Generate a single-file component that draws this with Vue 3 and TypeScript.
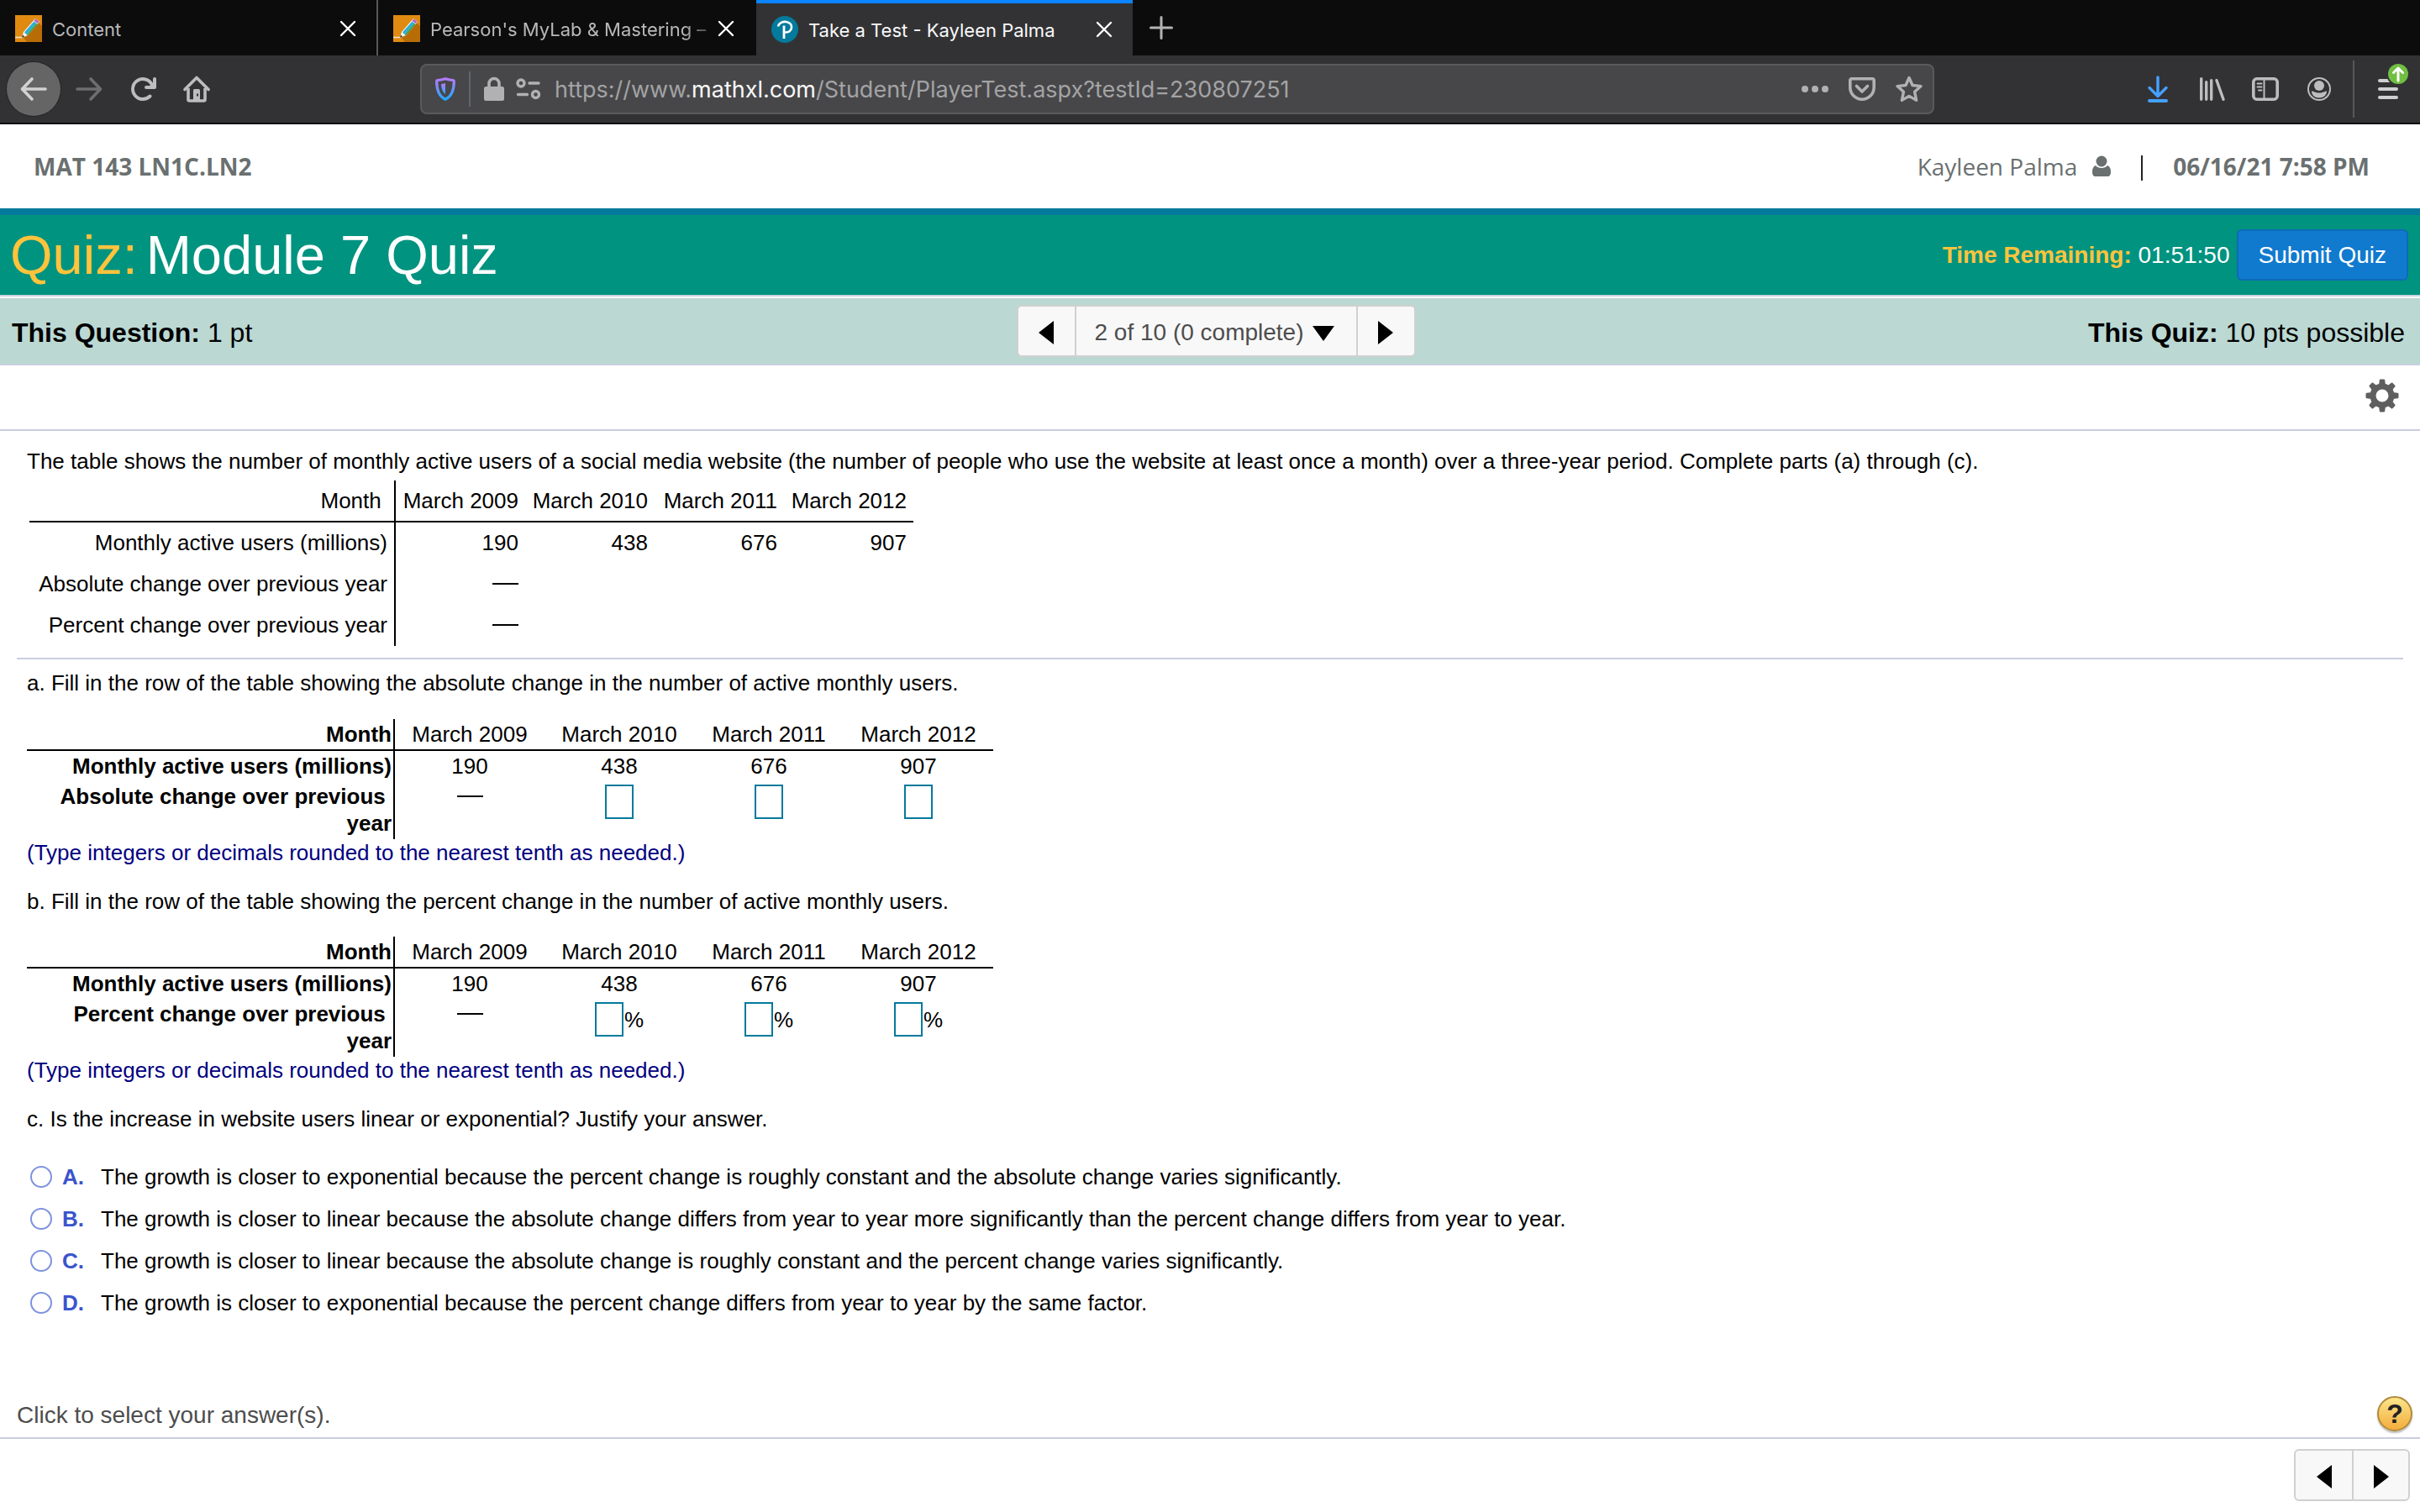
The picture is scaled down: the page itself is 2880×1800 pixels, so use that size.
<script setup lang="ts">
import { ref } from 'vue'

interface Choice { letter: string; text: string }
interface Part { id: string; prompt: string; label: string; unit: string }

const months: string[] = ['March 2009', 'March 2010', 'March 2011', 'March 2012']
const users: number[] = [190, 438, 676, 907]
const changeRows: string[] = ['Absolute change over previous year', 'Percent change over previous year']

const parts: Part[] = [
  { id: 'a', prompt: 'a. Fill in the row of the table showing the absolute change in the number of active monthly users.', label: 'Absolute change over previous', unit: '' },
  { id: 'b', prompt: 'b. Fill in the row of the table showing the percent change in the number of active monthly users.', label: 'Percent change over previous', unit: '%' },
]

const choices: Choice[] = [
  { letter: 'A', text: 'The growth is closer to exponential because the percent change is roughly constant and the absolute change varies significantly.' },
  { letter: 'B', text: 'The growth is closer to linear because the absolute change differs from year to year more significantly than the percent change differs from year to year.' },
  { letter: 'C', text: 'The growth is closer to linear because the absolute change is roughly constant and the percent change varies significantly.' },
  { letter: 'D', text: 'The growth is closer to exponential because the percent change differs from year to year by the same factor.' },
]

const tabs = [
  { title: 'Content', icon: 'pencil', active: false },
  { title: "Pearson's MyLab & Mastering –", icon: 'pencil', active: false },
  { title: 'Take a Test - Kayleen Palma', icon: 'pearson', active: true },
]

const picked = ref<string>('')
</script>

<template>
  <div class="window">
    <div class="tabs">
      <div v-for="tab in tabs" :key="tab.title" class="tab" :class="{ active: tab.active }">
        <svg v-if="tab.icon === 'pencil'" class="ico" viewBox="0 0 32 32">
          <rect width="32" height="32" fill="#e08a12" />
          <path d="M10 27 28 9 32 13V32H14z" fill="#b86c06" />
          <path d="M0 26.500h9" stroke="#f3e6cc" stroke-width="1.500" />
          <path d="M8 27 10 20 24 4 29 8 15 24z" fill="#f4f4f4" />
          <path d="M11 20.500 22.500 7.500 25 9.500 13.500 23z" fill="#27b0d8" />
          <path d="M13.500 23 25 9.500 26.500 11 15 24z" fill="#35a35c" />
          <path d="M22.500 6.500 24.500 4.500 28.500 8 26.500 10z" fill="#b45fc0" />
          <path d="M8 27l1-3.500 2 2z" fill="#333" />
        </svg>
        <svg v-else class="ico" viewBox="0 0 32 32">
          <circle cx="16" cy="16" r="16" fill="#047a9c" />
          <path d="M8 12.500C9 8 14 6.500 17.500 7c4.500.6 7 3.400 6.500 7-.5 3.800-4 5.800-8 5.500" fill="none" stroke="#fff" stroke-width="2.600" />
          <path d="M15 11.500V27" stroke="#fff" stroke-width="2.800" />
        </svg>
        <span class="tab-title">{{ tab.title }}</span>
        <button class="plain" aria-label="Close tab">
          <svg width="20" height="20" viewBox="0 0 20 20"><path d="M2 2 18 18M18 2 2 18" stroke="#fff" stroke-width="2.400" stroke-linecap="round" /></svg>
        </button>
      </div>
      <button class="plain new-tab" aria-label="New tab">
        <svg width="28" height="28" viewBox="0 0 28 28"><path d="M14 1.500v25M1.500 14h25" stroke="#b4b4b5" stroke-width="3" stroke-linecap="round" /></svg>
      </button>
    </div>

    <div class="toolbar">
      <div class="history">
        <button class="plain back" aria-label="Back">
          <svg class="ico" viewBox="0 0 32 32"><path d="M30 16H3M14 4 2.500 16 14 28" fill="none" stroke="#d2d2d3" stroke-width="3.600" stroke-linecap="round" stroke-linejoin="round" /></svg>
        </button>
        <button class="plain" aria-label="Forward">
          <svg class="ico" viewBox="0 0 32 32"><path d="M2 16h27M18 4 29.500 16 18 28" fill="none" stroke="#6e6e70" stroke-width="3.600" stroke-linecap="round" stroke-linejoin="round" /></svg>
        </button>
        <button class="plain" aria-label="Reload">
          <svg class="ico" viewBox="0 0 16 16"><path fill="#bdbdbe" d="M15 1a1 1 0 0 0-1 1v2.418A6.995 6.995 0 1 0 8 15a6.954 6.954 0 0 0 4.950-2.050 1 1 0 0 0-1.414-1.414A5.019 5.019 0 1 1 12.549 6H10a1 1 0 0 0 0 2h5a1 1 0 0 0 1-1V2a1 1 0 0 0-1-1z" /></svg>
        </button>
        <button class="plain" aria-label="Home">
          <svg class="ico" viewBox="0 0 32 32"><path d="M2 16.500 16 2.500 30 16.500" fill="none" stroke="#bdbdbe" stroke-width="3.600" stroke-linecap="round" stroke-linejoin="round" /><path d="M6 15v13.500a1.500 1.500 0 0 0 1.500 1.500h17a1.500 1.500 0 0 0 1.500-1.500V15" fill="none" stroke="#bdbdbe" stroke-width="3.600" /><path d="M12 30V17.500a1.500 1.500 0 0 1 1.500-1.500h5a1.500 1.500 0 0 1 1.500 1.500V30z" fill="#bdbdbe" /><rect x="16" y="21.500" width="2" height="3" fill="#323234" /></svg>
        </button>
      </div>

      <div class="address">
        <svg class="shield" width="24" height="28" viewBox="0 0 24 28">
          <defs><linearGradient id="shieldFill" x1="0" y1="0" x2="0" y2="1"><stop offset="0" stop-color="#b77cff" /><stop offset="1" stop-color="#1fa8ff" /></linearGradient></defs>
          <path d="M12 1.700c3.200.9 6.200 1.600 9 1.800.8 0 1.300.6 1.300 1.400C22.300 15 20 22.500 12 26.300 4 22.500 1.700 15 1.700 4.900c0-.8.5-1.400 1.300-1.400 2.800-.2 5.800-.9 9-1.800z" fill="none" stroke="url(#shieldFill)" stroke-width="3.200" />
          <path d="M12 7v13.500C8.500 17.500 7.200 13.500 7 8.200z" fill="url(#shieldFill)" />
        </svg>
        <span class="address-rule"></span>
        <svg width="24" height="30" viewBox="0 0 24 30"><path d="M6 14V8.500a6 6 0 0 1 12 0V14" fill="none" stroke="#b1b1b3" stroke-width="3.600" /><rect y="12" width="24" height="17" rx="2.500" fill="#b1b1b3" /></svg>
        <svg class="perm" width="30" height="26" viewBox="0 0 30 26" fill="none" stroke="#b1b1b3" stroke-width="3.400" stroke-linecap="round"><circle cx="6" cy="6" r="4" /><path d="M16 6h11M2.500 19.500h11" /><circle cx="23.500" cy="19.500" r="4" /></svg>
        <div class="url" role="textbox" contenteditable="true" spellcheck="false" aria-label="Address">https://www.<b>mathxl.com</b>/Student/PlayerTest.aspx?testId=230807251</div>
        <button class="plain" aria-label="Page actions">
          <svg class="ico" viewBox="0 0 32 32" fill="#b1b1b3"><circle cx="4" cy="16" r="4" /><circle cx="16" cy="16" r="4" /><circle cx="28" cy="16" r="4" /></svg>
        </button>
        <button class="plain" aria-label="Save to Pocket">
          <svg class="ico" viewBox="0 0 32 32" fill="none" stroke="#b1b1b3" stroke-width="3.600" stroke-linecap="round" stroke-linejoin="round"><path d="M3.500 3.800h25a1.700 1.700 0 0 1 1.700 1.700V14a14.200 14.200 0 0 1-28.400 0V5.500a1.700 1.700 0 0 1 1.700-1.700z" /><path d="M9.500 12.500 16 19l6.500-6.500" /></svg>
        </button>
        <button class="plain" aria-label="Bookmark this page">
          <svg class="ico" viewBox="0 0 32 32"><path d="M16 2.500 20 11.500 30 12.600 22.600 19.300 24.600 29.400 16 24.400 7.400 29.400 9.400 19.300 2 12.600 12 11.500z" fill="none" stroke="#b1b1b3" stroke-width="3.400" stroke-linejoin="round" /></svg>
        </button>
      </div>

      <div class="tools">
        <button class="plain" aria-label="Downloads">
          <svg class="ico" viewBox="0 0 32 32" fill="none" stroke="#45a1ff" stroke-linecap="round" stroke-linejoin="round"><path d="M16 2v22M6 14.500 16 24.500l10-10" stroke-width="3.400" /><path d="M6 30h20" stroke-width="4" /></svg>
        </button>
        <button class="plain" aria-label="Library">
          <svg class="ico" viewBox="0 0 32 32" stroke="#bdbdbe" stroke-width="3.400" stroke-linecap="round"><path d="M3.700 3.700v24.600M9.700 7.700v20.600M15.700 5.700v22.600M22 5.700 30 28.300" /></svg>
        </button>
        <button class="plain" aria-label="Sidebars">
          <svg class="ico" viewBox="0 0 32 32" fill="none" stroke="#bdbdbe"><rect x="1.800" y="3.800" width="28.400" height="24.400" rx="4" stroke-width="3.600" /><path d="M14.500 4v24" stroke-width="2" /><path d="M6.500 9.500h5M6.500 13.500h5M8 17.500h3.500" stroke-width="2" stroke-linecap="round" /></svg>
        </button>
        <button class="plain" aria-label="Account">
          <svg class="ico" viewBox="0 0 32 32"><circle cx="16" cy="16" r="13" fill="none" stroke="#bdbdbe" stroke-width="2" /><circle cx="16" cy="12" r="6" fill="#bdbdbe" /><path d="M7 18.500c2.500 0 4 2 9 2s6.500-2 9-2c0 5-4 8-9 8s-9-3-9-8z" fill="#bdbdbe" /></svg>
        </button>
        <span class="tool-rule"></span>
        <button class="plain menu" aria-label="Open application menu">
          <svg width="24" height="28" viewBox="0 0 24 28"><path d="M2 4h20M2 14h20M2 24h20" stroke="#cfcfd0" stroke-width="4" stroke-linecap="round" /></svg>
          <svg class="update" width="28" height="28" viewBox="0 0 28 28"><circle cx="14" cy="14" r="14" fill="#323234" /><circle cx="14" cy="14" r="12" fill="#70bf41" /><path d="M14 22V7M8.500 12.500 14 7l5.500 5.500" fill="none" stroke="#fff" stroke-width="3" stroke-linecap="round" stroke-linejoin="round" /></svg>
        </button>
      </div>
    </div>

    <header class="course">
      <strong>MAT 143 LN1C.LN2</strong>
      <div class="who">
        <span>Kayleen Palma</span>
        <svg width="22" height="26" viewBox="0 0 22 26" fill="#6a7070"><circle cx="11" cy="7" r="6.500" /><path d="M4 12c2 2.200 4 3 7 3s5-.8 7-3c2.800 1 4 3.600 4 7.500 0 3.500-1 5.500-4 5.500H4c-3 0-4-2-4-5.500C0 15.600 1.200 13 4 12z" /></svg>
        <span class="bar"></span>
        <strong>06/16/21 7:58 PM</strong>
      </div>
    </header>

    <div class="title-bar">
      <h1><span class="gold">Quiz:</span> <span>Module 7 Quiz</span></h1>
      <div class="timer">
        <span><b class="gold">Time Remaining:</b> 01:51:50</span>
        <button class="submit">Submit Quiz</button>
      </div>
    </div>

    <div class="question-bar">
      <div class="points"><b>This Question:</b> 1 pt</div>
      <div class="pager">
        <button class="step" aria-label="Previous question"><svg width="18" height="28" viewBox="0 0 18 28"><path d="M18 0v28L0 14z" /></svg></button>
        <div class="jump">
          <select aria-label="Question"><option>2 of 10 (0 complete)</option></select>
          <svg width="26" height="18" viewBox="0 0 26 18"><path d="M0 0h26L13 18z" /></svg>
        </div>
        <button class="step" aria-label="Next question"><svg width="18" height="28" viewBox="0 0 18 28"><path d="M0 0v28l18-14z" /></svg></button>
      </div>
      <div class="points right"><b>This Quiz:</b> 10 pts possible</div>
    </div>

    <div class="settings">
      <button class="plain" aria-label="Settings">
        <svg width="40" height="40" viewBox="-20 -20 40 40">
          <g fill="#5f5f5f">
            <path v-for="n in 8" :key="n" d="M-4-12-3.200-18.500Q-3-19.500-2-19.500H2Q3-19.500 3.200-18.500L4-12z" :transform="`rotate(${n * 45})`" />
          </g>
          <circle r="11" fill="none" stroke="#5f5f5f" stroke-width="7" />
        </svg>
      </button>
    </div>

    <main class="question">
      <section class="stem">
        <p>The table shows the number of monthly active users of a social media website (the number of people who use the website at least once a month) over a three-year period. Complete parts (a) through (c).</p>
        <table class="given">
          <thead>
            <tr><th scope="col">Month&nbsp;</th><th v-for="m in months" :key="m" scope="col">{{ m }}</th></tr>
          </thead>
          <tbody>
            <tr><th scope="row">Monthly active users (millions)</th><td v-for="u in users" :key="u">{{ u }}</td></tr>
            <tr v-for="row in changeRows" :key="row"><th scope="row">{{ row }}</th><td><span class="dash"></span></td><td></td><td></td><td></td></tr>
          </tbody>
        </table>
      </section>

      <section class="parts">
        <div v-for="part in parts" :key="part.id" class="part">
          <p>{{ part.prompt }}</p>
          <table class="fill">
            <thead>
              <tr><th scope="col">Month</th><th v-for="m in months" :key="m" scope="col" class="month">{{ m }}</th></tr>
            </thead>
            <tbody>
              <tr><th scope="row">Monthly active users (millions)</th><td v-for="u in users" :key="u">{{ u }}</td></tr>
              <tr class="answers">
                <th scope="row">{{ part.label }}&nbsp;<br>year</th>
                <td><span class="dash"></span></td>
                <td v-for="m in months.slice(1)" :key="m">
                  <label class="blank"><input type="text" :aria-label="`${part.label} year, ${m}`"><span v-if="part.unit">{{ part.unit }}</span></label>
                </td>
              </tr>
            </tbody>
          </table>
          <p class="hint">(Type integers or decimals rounded to the nearest tenth as needed.)</p>
        </div>
        <p>c. Is the increase in website users linear or exponential? Justify your answer.</p>
        <div class="choices" role="radiogroup" aria-label="Part c">
          <label v-for="c in choices" :key="c.letter" class="choice">
            <input v-model="picked" type="radio" name="partC" :value="c.letter">
            <b>{{ c.letter }}.</b>
            <span>{{ c.text }}</span>
          </label>
        </div>
      </section>
    </main>

    <div class="prompt">
      <span>Click to select your answer(s).</span>
      <button class="plain help" aria-label="Help">?</button>
    </div>
    <footer class="bottom">
      <div class="pager">
        <button class="step" aria-label="Previous"><svg width="18" height="28" viewBox="0 0 18 28"><path d="M18 0v28L0 14z" /></svg></button>
        <button class="step" aria-label="Next"><svg width="18" height="28" viewBox="0 0 18 28"><path d="M0 0v28l18-14z" /></svg></button>
      </div>
    </footer>
  </div>
</template>

<style>
body { margin: 0; background: #fff; }
</style>

<style scoped>
* { box-sizing: border-box; }
.window {
  display: flex;
  flex-direction: column;
  min-height: 100vh;
  font-family: "Liberation Sans", Arial, sans-serif;
  font-size: 26px;
  line-height: 32px;
  color: #000;
}
svg { display: block; flex: none; }
p, h1 { margin: 0; }
.ico { width: 32px; height: 32px; }
.plain {
  display: flex;
  align-items: center;
  justify-content: center;
  flex: none;
  padding: 0;
  border: 0;
  background: none;
}

/* browser chrome */
.tabs { display: flex; height: 66px; background: #0c0c0d; font-family: Inter, Roboto, sans-serif; font-size: 22px; }
.tab {
  display: flex;
  align-items: center;
  width: 450px;
  padding: 2px 24px 0 18px;
  border-right: 2px solid #58585a;
  color: #b8b8b9;
}
.tab:nth-child(2) { padding-right: 26px; border-right: 0; }
.tab.active { width: 448px; padding: 0 24px 0 18px; border-right: 0; border-top: 4px solid #0a84ff; background: #323234; color: #f9f9fa; }
.tab-title { flex: 1; margin-left: 12px; padding-top: 1px; white-space: nowrap; }
.tab:nth-child(2) .tab-title { mask-image: linear-gradient(90deg, #000 88%, transparent 102%); }
.new-tab { width: 68px; }

.toolbar {
  display: flex;
  align-items: center;
  height: 82px;
  padding: 0 26px 0 8px;
  border-bottom: 2px solid #0c0c0d;
  background: #323234;
}
.history { display: flex; align-items: center; gap: 32px; width: 492px; }
.back { width: 64px; height: 64px; margin-right: -14px; border-radius: 50%; background: #656566; box-shadow: 0 0 0 1px #252526; }
.address {
  display: flex;
  align-items: center;
  flex: 1;
  height: 60px;
  padding: 0 12px 0 16px;
  border: 2px solid #5a5a5d;
  border-radius: 8px;
  background: #474749;
  gap: 24px;
}
.address-rule { width: 2px; height: 42px; margin-left: -8px; background: #5f6670; }
.address-rule + svg { margin-left: -8px; }
.perm { margin-left: -10px; }
.url { flex: 1; margin-left: -8px; padding-top: 2px; font-family: Inter, Roboto, sans-serif; font-size: 27px; color: #a3a3a5; white-space: nowrap; outline: 0; }
.url b { font-weight: 400; color: #f9f9fa; }
.tools { display: flex; align-items: center; gap: 32px; padding-left: 250px; }
.tool-rule { width: 2px; height: 68px; margin-left: -8px; background: #58585a; }
.menu { position: relative; margin-left: -4px; }
.update { position: absolute; top: -18px; right: -14px; }

/* course header */
.course {
  display: flex;
  align-items: center;
  justify-content: space-between;
  height: 100px;
  padding: 0 60px 0 40px;
  font-family: "Open Sans", sans-serif;
  font-size: 28px;
  color: #6a7070;
}
.who { display: flex; align-items: center; gap: 18px; }
.bar { width: 2px; height: 30px; margin: 4px 18px 0; background: #222; }
.title-bar {
  display: flex;
  align-items: center;
  justify-content: space-between;
  height: 105px;
  padding: 0 14px 0 12px;
  border-top: 8px solid #047a9c;
  border-bottom: 2px solid #c8d3df;
  background: #009380;
  color: #fff;
}
h1 { display: flex; gap: 10px; font-size: 65px; line-height: 72px; font-weight: 400; }
.gold { color: #ffc33c; }
.timer { display: flex; align-items: center; gap: 8px; font-size: 28px; }
.submit {
  height: 61px;
  padding: 0 24px;
  border: 2px solid #0d6bb8;
  border-radius: 6px;
  background: #107acf;
  color: #fff;
  font: inherit;
}
.question-bar {
  display: flex;
  align-items: center;
  height: 80px;
  margin-top: 2px;
  padding: 0 18px 0 14px;
  border-bottom: 2px solid #c8cfdf;
  background: #bbd8d3;
}
.points { flex: 1; padding-top: 3px; font-size: 32px; }
.right { text-align: right; }
.pager { display: flex; border: 2px solid #d0d0d0; border-radius: 6px; background: #f8f8f8; overflow: hidden; }
.question-bar .pager { margin-left: 18px; }
.step {
  display: flex;
  align-items: center;
  justify-content: center;
  width: 67px;
  height: 58px;
  padding: 4px 0 0;
  border: 0;
  background: none;
}
.step + .step { border-left: 2px solid #d0d0d0; }
.jump { position: relative; border: solid #d0d0d0; border-width: 0 2px; }
select {
  display: block;
  width: 333px;
  height: 58px;
  padding: 3px 0 0 22px;
  border: 0;
  appearance: none;
  background: none;
  color: #4d4d4d;
  font: inherit;
  font-size: 28px;
}
.jump svg { position: absolute; top: 23px; right: 26px; pointer-events: none; }
.settings { display: flex; align-items: center; justify-content: flex-end; height: 78px; padding: 0 25px 4px 0; border-bottom: 2px solid #c8cfdf; }

/* question */
.question { flex: 1; padding: 20px 20px 0; }
.stem { padding: 0 12px 14px; border-bottom: 2px solid #c8cfdf; }
table { border-collapse: separate; border-spacing: 0; }
th, td { padding: 0; }
.given { margin: 7px 0 0 3px; }
.given th, .given td { height: 49px; padding: 0 8px 2px 0; font-weight: 400; text-align: right; }
.given td, .given th + th { width: 154px; }
.given thead th { height: 50px; padding-bottom: 0; border-bottom: 2px solid #000; }
.given tr > :first-child { width: 436px; border-right: 2px solid #000; }
.dash { display: inline-block; width: 31px; height: 2px; vertical-align: 8px; background: #000; }

.parts { padding: 12px 12px 0; }
.fill { margin-top: 26px; }
.part:first-child .fill { margin-top: 27px; }
.fill th, .fill td { height: 36px; text-align: center; }
.fill td, .fill .month { width: 178px; font-weight: 400; }
.fill thead th { height: 38px; border-bottom: 2px solid #000; }
.fill tr > :first-child { width: 438px; padding-right: 2px; border-right: 2px solid #000; text-align: right; }
.fill .answers > * { height: 69px; padding-top: 2px; vertical-align: top; }
.blank { display: flex; align-items: center; justify-content: center; gap: 1px; padding-top: 2px; }
.blank input { width: 34px; height: 41px; padding: 0; border: 2px solid #047a9c; background: #fff; font: inherit; text-align: center; }
.hint { margin-bottom: 26px; color: #000080; }
.choices { margin-top: 28px; }
.choice { display: flex; align-items: center; height: 50px; }
.choice input { width: 26px; height: 26px; margin: 0 12px 0 4px; border: 2px solid #7f93e0; border-radius: 50%; appearance: none; background: #fff; }
.choice input:checked { background: radial-gradient(#3b54cc 40%, #fff 45%); }
.choice b { width: 46px; color: #3b54cc; }

/* bottom strip */
.prompt {
  display: flex;
  align-items: center;
  justify-content: space-between;
  height: 58px;
  padding: 0 9px 0 20px;
  border-bottom: 2px solid #c8cfdf;
  color: #4d4d4d;
  font-size: 28px;
}
.prompt span { padding-top: 3px; }
.help {
  width: 42px;
  height: 42px;
  border: 2px solid #b08a3c;
  border-radius: 50%;
  background: linear-gradient(#fce58c, #f3ad3d);
  box-shadow: 0 2px 2px #bbb;
  color: #222;
  font-family: inherit;
  font-size: 32px;
  font-weight: 700;
}
.bottom { display: flex; justify-content: flex-end; padding: 12px 12px 13px; }
</style>
